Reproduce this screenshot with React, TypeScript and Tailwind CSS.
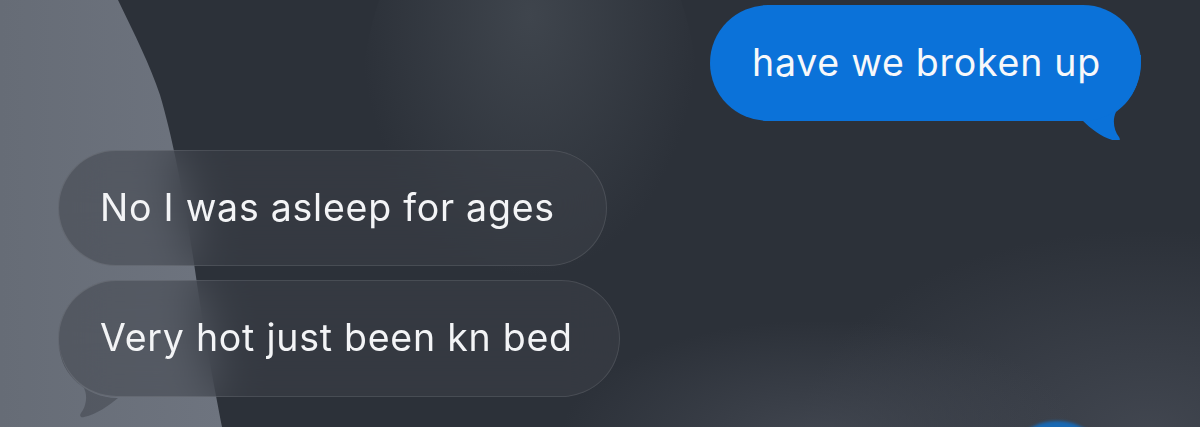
import React from "react";

function Background() {
  return (
    <svg
      className="absolute inset-0 w-full h-full"
      viewBox="0 0 1200 427"
      preserveAspectRatio="none"
    >
      <defs>
        <linearGradient id="light" x1="0" y1="0" x2="1" y2="0">
          <stop offset="0" stopColor="#666c76" />
          <stop offset="1" stopColor="#6e747f" />
        </linearGradient>
        <radialGradient id="band" cx="0.5" cy="0.3" r="0.5">
          <stop offset="0" stopColor="#41474f" stopOpacity="0.9" />
          <stop offset="1" stopColor="#41474f" stopOpacity="0" />
        </radialGradient>
        <radialGradient id="br" cx="0.5" cy="0.5" r="0.5">
          <stop offset="0" stopColor="#464b55" stopOpacity="0.8" />
          <stop offset="1" stopColor="#464b55" stopOpacity="0" />
        </radialGradient>
      </defs>
      <rect width="1200" height="427" fill="#2c3139" />
      <ellipse cx="530" cy="120" rx="170" ry="260" fill="url(#band)" />
      <ellipse cx="1150" cy="430" rx="350" ry="200" fill="url(#br)" />
      <ellipse cx="820" cy="440" rx="260" ry="120" fill="url(#br)" />
      <path
        d="M0,0 L118,0 C135,35 150,65 160,95 C172,135 185,200 195,270 C205,340 215,390 222,427 L0,427 Z"
        fill="url(#light)"
      />
    </svg>
  );
}

const font = { fontFamily: "Inter, 'Noto Sans', sans-serif" };

export default function App() {
  return (
    <div
      className="relative w-[1200px] h-[427px] overflow-hidden bg-[#2e333c]"
      style={font}
    >
      <Background />
      <div className="relative flex flex-col">
        {/* outgoing */}
        <div className="flex justify-end pr-[59px] pt-[5px]">
          <div className="relative">
            <div className="relative z-10 flex items-center w-[431px] h-[116px] rounded-full bg-[#0b72d9] pl-[42px] text-[37.5px] text-[#f7f8fa] tracking-[0.75px]">
              have we broken up
            </div>
            <svg
              className="absolute z-0 left-[330px] top-[40px] w-[101px] h-[95px]"
              viewBox="1040 45 101 95"
            >
              <path
                d="M1141,55 C1141,80 1135,98 1116,112 C1112,120 1114,131 1119,137 C1121,140 1119,142 1116,141 C1103,138 1092,130 1082,120 L1060,120 L1060,55 Z"
                fill="#0b72d9"
              />
            </svg>
          </div>
        </div>

        {/* incoming */}
        <div className="flex flex-col items-start gap-[14px] pl-[58px] mt-[29px]">
          <div className="flex items-center w-[549px] h-[116px] rounded-full bg-[rgba(62,66,74,0.5)] backdrop-blur-xl border border-white/10 pl-[41px] text-[37.5px] text-[#f3f4f6] tracking-[0.75px]">
            No I was asleep for ages
          </div>
          <div className="relative">
            <div className="flex items-center w-[562px] h-[117px] rounded-full bg-[rgba(62,66,74,0.5)] backdrop-blur-xl border border-white/10 pl-[41px] text-[37.5px] text-[#f3f4f6] tracking-[0.75px]">
              Very hot just been kn bed
            </div>
            <svg
              className="absolute left-0 top-0 w-[70px] h-[140px]"
              viewBox="58 279 70 140"
            >
              <path
                d="M59,339 C59,358 65,373 84,387 C88,395 86,406 81,412 C79,415 81,417 84,416 C97,413 108,405 118,397 L117,397 A58 58 0 0 1 59,339 Z"
                fill="rgba(62,66,74,0.5)"
              />
            </svg>
          </div>
        </div>

        {/* next outgoing, clipped */}
        <div className="flex justify-end pr-[88px] mt-[24px]">
          <div className="w-[110px] h-[116px] rounded-full bg-[#1868b3] blur-[1.5px]" />
        </div>
      </div>
    </div>
  );
}
